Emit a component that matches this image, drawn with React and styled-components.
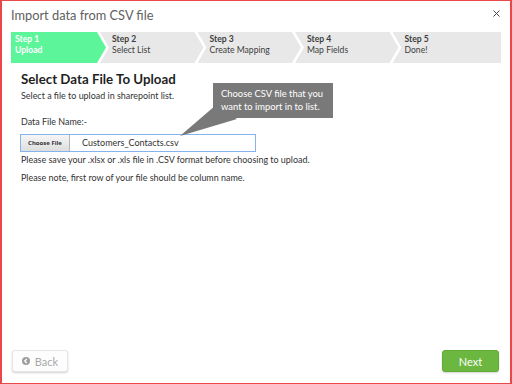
import React from "react";
import styled, { createGlobalStyle } from "styled-components";

const GlobalStyle = createGlobalStyle`
  html, body { margin: 0; padding: 0; background: #ffffff; }
  body { font-family: Lato, "Open Sans", sans-serif; }
  * { box-sizing: border-box; }
`;

const Frame = styled.div`
  width: 512px;
  height: 384px;
  border-style: solid;
  border-color: #e9474a;
  border-width: 1px 2px 1px 2px;
  background: #fff;
  display: flex;
  flex-direction: column;
  overflow: hidden;
`;

const Header = styled.div`
  display: flex;
  justify-content: space-between;
  align-items: flex-start;
  padding: 6px 9px 0 9px;
  height: 31px;
`;

const Title = styled.h1`
  margin: 0;
  font-family: Lato, sans-serif;
  font-weight: 400;
  font-size: 12.8px;
  line-height: 16px;
  color: #606060;
`;

const Close = styled.button`
  border: 0;
  background: none;
  padding: 0;
  margin: 2px 0 0 0;
  width: 9px;
  height: 9px;
  display: flex;
  cursor: pointer;
`;

const Stepper = styled.div`
  display: flex;
  margin: 0 9px;
  height: 31px;
`;

const Step = styled.div`
  position: relative;
  flex: ${(p) => (p.$last ? "1 1 auto" : "0 0 auto")};
  width: ${(p) => (p.$first ? "95px" : p.$last ? "auto" : "103.5px")};
  margin-left: ${(p) => (p.$first ? "0" : "-6px")};
  padding: 2px 0 0 ${(p) => (p.$first ? "4px" : "12px")};
  background: ${(p) => (p.$active ? "#5cf59a" : "#e8e8e8")};
  color: ${(p) => (p.$active ? "#ffffff" : "#3d3d3d")};
  font-family: Lato, sans-serif;
  font-size: 8.6px;
  line-height: 11px;
  clip-path: ${(p) =>
    p.$first
      ? "polygon(0 0, calc(100% - 9px) 0, 100% 50%, calc(100% - 9px) 100%, 0 100%)"
      : p.$last
      ? "polygon(0 0, 100% 0, 100% 100%, 0 100%, 9px 50%)"
      : "polygon(0 0, calc(100% - 9px) 0, 100% 50%, calc(100% - 9px) 100%, 0 100%, 9px 50%)"};
`;

const StepNum = styled.div`
  font-weight: 700;
`;

const StepLabel = styled.div`
  font-weight: ${(p) => (p.$active ? 700 : 400)};
`;

const Body = styled.div`
  padding: 7px 19px 0 19px;
  position: relative;
  flex: 1;
`;

const Heading = styled.h2`
  margin: 0;
  font-family: Lato, sans-serif;
  font-weight: 700;
  font-size: 13.3px;
  line-height: 18px;
  color: #1f1f1f;
`;

const Text = styled.p`
  margin: ${(p) => p.$m || "0"};
  font-family: Lato, sans-serif;
  font-size: 8.95px;
  line-height: 12px;
  color: #333;
`;

const FileRow = styled.div`
  margin: 6px 0 0 -1px;
  width: 236px;
  height: 18px;
  border: 1px solid #86b3ee;
  display: flex;
  align-items: stretch;
  background: #fff;
`;

const ChooseBtn = styled.div`
  width: 49px;
  background: linear-gradient(#f6f6f6, #dedede);
  border-right: 1px solid #b5b5b5;
  font-family: "Open Sans", sans-serif;
  font-weight: 700;
  font-size: 6px;
  color: #333;
  display: flex;
  align-items: center;
  justify-content: center;
`;

const FileName = styled.div`
  padding-left: 12px;
  font-family: Lato, sans-serif;
  font-size: 9px;
  line-height: 16px;
  color: #333;
`;

const Tooltip = styled.div`
  position: absolute;
  left: 211px;
  top: 20px;
  width: 120px;
  height: 35px;
  background: #797979;
  color: #fff;
  font-family: Lato, sans-serif;
  font-size: 9.4px;
  line-height: 13px;
  white-space: nowrap;
  padding: 4px 0 0 8px;
`;

const TipArrow = styled.svg`
  position: absolute;
  left: 178px;
  top: 40px;
`;

const Footer = styled.div`
  display: flex;
  justify-content: space-between;
  align-items: center;
  padding: 0 11px 11px 10px;
`;

const Button = styled.button`
  width: ${(p) => (p.$primary ? "57px" : "56px")};
  height: 22px;
  border-radius: 3px;
  border: 1px solid ${(p) => (p.$primary ? "#62ab35" : "#e6e6e6")};
  background: ${(p) => (p.$primary ? "#6cb740" : "#fdfdfd")};
  color: ${(p) => (p.$primary ? "#fff" : "#a9a9a9")};
  box-shadow: 0 1px 2px rgba(0, 0, 0, 0.18);
  font-family: Lato, sans-serif;
  font-size: 11px;
  display: flex;
  align-items: center;
  justify-content: center;
  gap: 5px;
  padding: 0;
  cursor: pointer;
`;

const steps = [
  ["Step 1", "Upload"],
  ["Step 2", "Select List"],
  ["Step 3", "Create Mapping"],
  ["Step 4", "Map Fields"],
  ["Step 5", "Done!"],
];

export default function App() {
  return (
    <>
      <GlobalStyle />
      <Frame>
        <Header>
          <Title>Import data from CSV file</Title>
          <Close aria-label="close">
            <svg width="9" height="9" viewBox="0 0 9 9">
              <path d="M1.5 1.5 L7.5 7.5 M7.5 1.5 L1.5 7.5" stroke="#444" strokeWidth="1" />
            </svg>
          </Close>
        </Header>
        <Stepper>
          {steps.map(([n, l], i) => (
            <Step key={n} $first={i === 0} $last={i === steps.length - 1} $active={i === 0}>
              <StepNum>{n}</StepNum>
              <StepLabel $active={i === 0}>{l}</StepLabel>
            </Step>
          ))}
        </Stepper>
        <Body>
          <Heading>Select Data File To Upload</Heading>
          <Text $m="2px 0 0 0">Select a file to upload in sharepoint list.</Text>
          <Text $m="14px 0 0 0">Data File Name:-</Text>
          <FileRow>
            <ChooseBtn>Choose File</ChooseBtn>
            <FileName>Customers_Contacts.csv</FileName>
          </FileRow>
          <Text $m="2px 0 0 0">Please save your .xlsx or .xls file in .CSV format before choosing to upload.</Text>
          <Text $m="6px 0 0 0">Please note, first row of your file should be column name.</Text>
          <TipArrow width="70" height="40" viewBox="0 0 70 40">
            <polygon points="36,2 0,33 57,16" fill="#797979" />
          </TipArrow>
          <Tooltip>
            Choose CSV file that you
            <br />
            want to import in to list.
          </Tooltip>
        </Body>
        <Footer>
          <Button>
            <svg width="8" height="8" viewBox="0 0 8 8">
              <circle cx="4" cy="4" r="4" fill="#9e9e9e" />
              <path d="M4.7 2 L2.8 4 L4.7 6" stroke="#fff" strokeWidth="1.3" fill="none" />
            </svg>
            Back
          </Button>
          <Button $primary>Next</Button>
        </Footer>
      </Frame>
    </>
  );
}
